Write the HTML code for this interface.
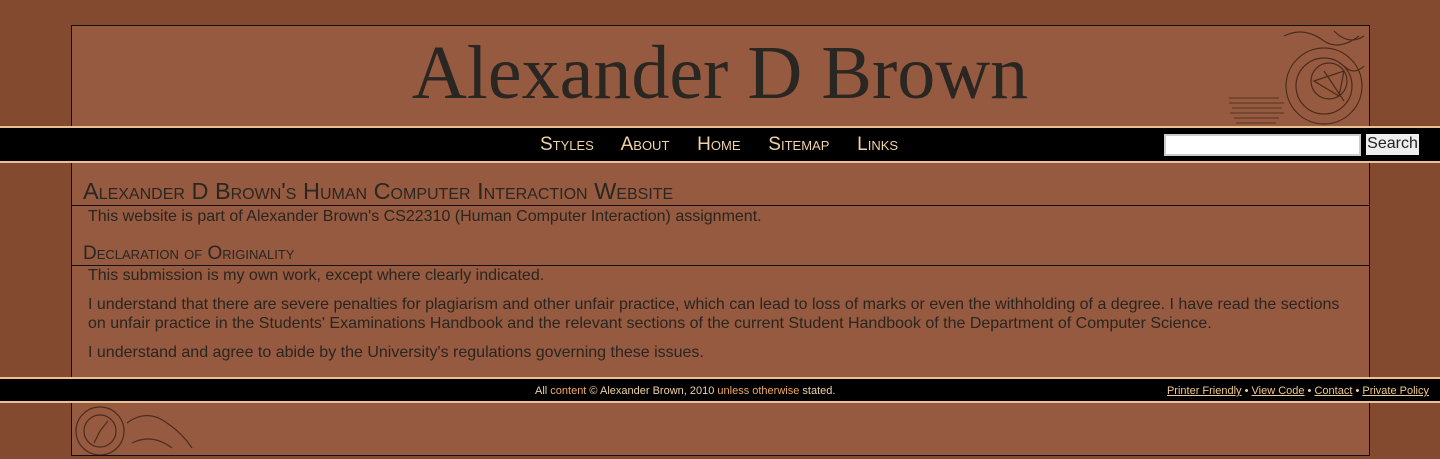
<!DOCTYPE html>
<html><head><style>
*{margin:0;padding:0;box-sizing:border-box}
body{width:1440px;height:459px;background:#844a2f;font-family:"Liberation Sans",sans-serif;color:#2a2520;position:relative;overflow:hidden}
.box{position:absolute;left:71px;width:1299px;background:#955a3f;border:1px solid #111}
.band{position:absolute;left:0;width:1440px;background:#000;border-top:2px solid #e9c190;border-bottom:2px solid #e9c190}
h1{position:absolute;left:0;width:1440px;top:30px;text-align:center;font-family:"Liberation Serif",serif;font-weight:normal;font-size:76px;color:#2a2622}
.nav{position:absolute;top:134px;left:540px;font-size:19px;font-variant:small-caps;color:#f0d2a8}
.nav span{margin-right:22.5px}
h2{font-weight:normal;font-variant:small-caps;font-size:23.5px;color:#2a2622;padding-left:11px;border-bottom:1px solid #111;line-height:28px}
h3{font-weight:normal;font-variant:small-caps;font-size:19px;color:#2a2622;padding-left:11px;border-bottom:1px solid #111;line-height:23px}
p{font-size:16px;padding-left:16px;line-height:19px;padding-right:16px}
a{color:#f0c890;text-decoration:underline}
.o{color:#f0a860}
</style></head><body>
<div class="box" style="top:25px;height:102px;border-bottom:none">
<svg style="position:absolute;right:0;top:0" width="145" height="101" viewBox="0 0 145 101">
<g fill="none" stroke="#3a2014" stroke-width="1.2" opacity="0.8">
<circle cx="100" cy="60" r="38"/><circle cx="100" cy="60" r="28"/><circle cx="105" cy="55" r="18"/>
<path d="M60 10 q20 -10 40 5 q15 10 35 -5 M110 5 q15 15 30 5 M120 40 q10 10 20 0"/>
<path d="M90 55 l30 -10 l-5 25 z M100 45 l20 30"/>
</g>
<g stroke="#3a2014" stroke-width="1" opacity="0.7">
<path d="M5 72h50M5 77h55M8 82h50M6 87h54M10 92h45M12 97h40"/>
</g>
</svg>
</div>
<h1>Alexander D Brown</h1>
<div class="band" style="top:126px;height:37px"></div>
<div class="nav"><span>Styles</span> <span>About</span> <span>Home</span> <span>Sitemap</span> <span>Links</span></div>
<div style="position:absolute;left:1164px;top:134px;width:197px;height:22px;background:#fff;border:2px solid #ccc"></div>
<div style="position:absolute;left:1366px;top:134px;width:53px;height:21px;background:#eee;font-size:16px;line-height:20px;text-align:center;color:#222">Search</div>
<div class="box" style="top:163px;height:215px;border-top:none;border-bottom:none;padding-top:14px">
<h2>Alexander D Brown's Human Computer Interaction Website</h2>
<p style="margin-top:1px">This website is part of Alexander Brown's CS22310 (Human Computer Interaction) assignment.</p>
<h3 style="margin-top:16px">Declaration of Originality</h3>
<p style="margin-top:0px">This submission is my own work, except where clearly indicated.</p>
<p style="margin-top:10px">I understand that there are severe penalties for plagiarism and other unfair practice, which can lead to loss of marks or even the withholding of a degree. I have read the sections on unfair practice in the Students' Examinations Handbook and the relevant sections of the current Student Handbook of the Department of Computer Science.</p>
<p style="margin-top:10px">I understand and agree to abide by the University's regulations governing these issues.</p>
</div>
<div class="band" style="top:377px;height:26px"></div>
<div style="position:absolute;top:385px;left:535px;font-size:11px;color:#f0d2a8">All <span class="o">content</span> © Alexander Brown, 2010 <span class="o">unless otherwise</span> stated.</div>
<div style="position:absolute;top:385px;right:11px;font-size:11px;color:#f0d2a8"><a>Printer Friendly</a> • <a>View Code</a> • <a>Contact</a> • <a>Private Policy</a></div>
<div class="box" style="top:403px;height:53px;border-top:none">
<svg style="position:absolute;left:0;top:0" width="125" height="52"><g fill="none" stroke="#3a2014" stroke-width="1.2" opacity="0.8"><circle cx="28" cy="28" r="24"/><circle cx="28" cy="28" r="16"/><path d="M28 28l8-10M28 28l-6 12M55 20q20-15 40 0q15 10 25 25M60 40q20-10 40 5"/></g></svg>
</div>
</body></html>
